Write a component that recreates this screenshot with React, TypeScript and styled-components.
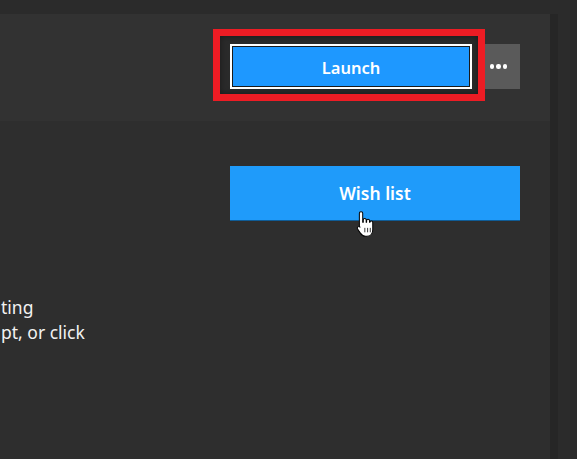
import React from "react";
import styled, { createGlobalStyle } from "styled-components";

const Global = createGlobalStyle`
  html, body { margin: 0; padding: 0; background: #2a2a2a; }
  body { font-family: "Noto Sans", "Open Sans", sans-serif; overflow: hidden; }
  #root { width: 577px; height: 459px; }
`;

const Page = styled.div`
  display: flex;
  width: 577px;
  height: 459px;
  background: #2b2b2b;
`;

const Panel = styled.div`
  width: 550px;
  margin-top: 14px;
  display: flex;
  flex-direction: column;
  background: #2e2e2e;
`;

const Shadow = styled.div`
  width: 8px;
  margin-top: 14px;
  background: #262626;
`;

const Header = styled.div`
  height: 107px;
  background: #323232;
  display: flex;
  justify-content: flex-end;
  align-items: flex-start;
  padding: 30px 30px 0 0;
  box-sizing: border-box;
`;

const Group = styled.div`
  display: flex;
  gap: 2px;
`;

const LaunchWrap = styled.div`
  position: relative;
  display: flex;
  &::before {
    content: "";
    position: absolute;
    left: -17px;
    top: -15px;
    right: -13px;
    bottom: -12px;
    border: 7px solid #ed1c24;
    background: #2a2a2a;
    box-shadow: inset 0 0 6px rgba(0, 0, 0, 0.4);
  }
`;

const LaunchButton = styled.button`
  position: relative;
  width: 242px;
  height: 45px;
  background: #1e98ff;
  border: 2px solid #ffffff;
  box-shadow: inset 0 0 0 1px #1a1a1a;
  color: #ffffff;
  font-family: "Noto Sans", "Open Sans", sans-serif;
  font-weight: 600;
  font-size: 16.5px;
  padding: 1px 0 0;
  cursor: pointer;
`;

const MoreButton = styled.button`
  width: 46px;
  height: 45px;
  background: #5a5a5a;
  border: none;
  display: flex;
  align-items: center;
  justify-content: flex-end;
  padding: 0 13px 0 0;
  gap: 2px;
`;

const Dot = styled.span`
  width: 4.5px;
  height: 4.5px;
  border-radius: 50%;
  background: #ffffff;
`;

const Body = styled.div`
  flex: 1;
  display: flex;
  flex-direction: column;
  padding: 45px 30px 0 0;
`;

const WishButton = styled.button`
  position: relative;
  align-self: flex-end;
  width: 290px;
  height: 55px;
  background: #1f9bfa;
  border: none;
  border-bottom: 1px solid #0f5c96;
  color: #ffffff;
  font-family: "Noto Sans", "Open Sans", sans-serif;
  font-weight: 600;
  font-size: 17.5px;
  padding: 0;
`;

const Cursor = styled.svg`
  position: absolute;
  left: 126px;
  top: 44px;
`;

const Text = styled.div`
  margin-top: 74px;
  color: #f2f2f2;
  font-size: 17.5px;
  line-height: 25px;
`;

const Line = styled.div`
  margin-left: 1px;
  white-space: nowrap;
`;

export default function App() {
  return (
    <>
      <Global />
      <Page>
        <Panel>
          <Header>
            <Group>
              <LaunchWrap>
                <LaunchButton>Launch</LaunchButton>
              </LaunchWrap>
              <MoreButton aria-label="More">
                <Dot />
                <Dot />
                <Dot />
              </MoreButton>
            </Group>
          </Header>
          <Body>
            <WishButton>
              Wish list
              <Cursor width="19" height="29" viewBox="0 0 16 26">
                <path
                  d="M4 1.5c.9 0 1.5.6 1.5 1.5v8h.5V9c0-.8.6-1.3 1.3-1.3s1.3.5 1.3 1.3v2h.4v-1.3c0-.8.6-1.3 1.3-1.3s1.3.5 1.3 1.3V11h.4c0-.8.5-1.2 1.2-1.2s1.3.5 1.3 1.3v6.5c0 3.2-2 5.900-5.4 5.9H8c-2.3 0-3.4-1.1-4.6-2.8L.9 17c-.5-.7-.3-1.5.3-1.9.6-.4 1.4-.3 1.900.3L2.5 15V3c0-.9.6-1.5 1.5-1.5z"
                  fill="#ffffff"
                  stroke="#000000"
                  strokeWidth="0.9"
                  strokeLinejoin="round"
                />
                <path d="M7.4 16v4M9.9 16v4M12.3 16v4" stroke="#000" strokeWidth="0.7" />
              </Cursor>
            </WishButton>
            <Text>
              <Line>ting</Line>
              <Line>pt, or click</Line>
            </Text>
          </Body>
        </Panel>
        <Shadow />
      </Page>
    </>
  );
}
